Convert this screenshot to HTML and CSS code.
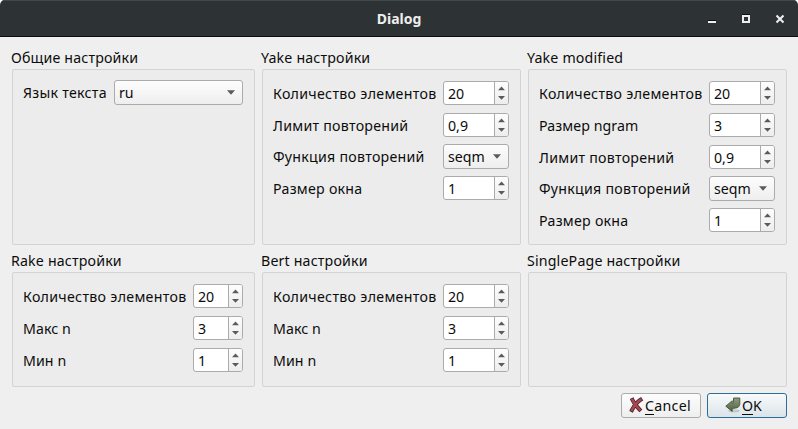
FILE: index.html
```html
<!DOCTYPE html>
<html lang="ru">
<head>
<meta charset="utf-8">
<title>Dialog</title>
<link rel="stylesheet" href="styles.css">
</head>
<body>
<svg class="defs" width="0" height="0">
  <symbol id="spin" viewBox="0 0 13 22"><path d="M3 8.3 L6.5 4.5 L10 8.3 Z M3 14 L6.5 17.8 L10 14 Z"/></symbol>
  <symbol id="down" viewBox="0 0 8 5"><path d="M0 0.3 H8 L4 4.8 Z"/></symbol>
</svg>
<div class="window">
  <header class="titlebar">
    <div class="title">Dialog</div>
    <div class="controls">
      <svg width="8" height="10" viewBox="0 0 8 10"><path class="shade" d="M0 6h8v1H0z"/><path d="M0 7h8v2H0z"/></svg>
      <svg width="8" height="10" viewBox="0 0 8 10"><path class="shade" d="M0 0h8v1H0z"/><path fill-rule="evenodd" d="M0 1h8v8H0z M2 3v4h4V3z"/></svg>
      <svg width="8" height="10" viewBox="0 0 8 10"><path class="cross" d="M0.5 1.5 L7.5 8.5 M7.5 1.5 L0.5 8.5"/></svg>
    </div>
  </header>
  <main class="groups">
    <section class="group">
      <h2>Общие настройки</h2>
      <div class="panel">
        <div class="row combo-row"><label>Язык текста</label><div class="combo wide"><span>ru</span><svg class="down"><use href="#down"/></svg></div></div>
      </div>
    </section>
    <section class="group">
      <h2>Yake настройки</h2>
      <div class="panel">
        <div class="row"><label class="long">Количество элементов</label><div class="spin"><span>20</span><svg><use href="#spin"/></svg></div></div>
        <div class="row"><label>Лимит повторений</label><div class="spin"><span>0,9</span><svg><use href="#spin"/></svg></div></div>
        <div class="row combo-row"><label>Функция повторений</label><div class="combo"><span>seqm</span><svg class="down"><use href="#down"/></svg></div></div>
        <div class="row"><label>Размер окна</label><div class="spin"><span>1</span><svg><use href="#spin"/></svg></div></div>
      </div>
    </section>
    <section class="group">
      <h2>Yake modified</h2>
      <div class="panel">
        <div class="row"><label class="long">Количество элементов</label><div class="spin"><span>20</span><svg><use href="#spin"/></svg></div></div>
        <div class="row"><label class="mixed">Размер ngram</label><div class="spin"><span>3</span><svg><use href="#spin"/></svg></div></div>
        <div class="row"><label>Лимит повторений</label><div class="spin"><span>0,9</span><svg><use href="#spin"/></svg></div></div>
        <div class="row combo-row"><label>Функция повторений</label><div class="combo"><span>seqm</span><svg class="down"><use href="#down"/></svg></div></div>
        <div class="row"><label>Размер окна</label><div class="spin"><span>1</span><svg><use href="#spin"/></svg></div></div>
      </div>
    </section>
    <section class="group">
      <h2>Rake настройки</h2>
      <div class="panel">
        <div class="row"><label class="long">Количество элементов</label><div class="spin narrow"><span>20</span><svg><use href="#spin"/></svg></div></div>
        <div class="row"><label class="mixed">Макс n</label><div class="spin narrow"><span>3</span><svg><use href="#spin"/></svg></div></div>
        <div class="row"><label class="mixed">Мин n</label><div class="spin narrow"><span>1</span><svg><use href="#spin"/></svg></div></div>
      </div>
    </section>
    <section class="group">
      <h2>Bert настройки</h2>
      <div class="panel">
        <div class="row"><label class="long">Количество элементов</label><div class="spin"><span>20</span><svg><use href="#spin"/></svg></div></div>
        <div class="row"><label class="mixed">Макс n</label><div class="spin"><span>3</span><svg><use href="#spin"/></svg></div></div>
        <div class="row"><label class="mixed">Мин n</label><div class="spin"><span>1</span><svg><use href="#spin"/></svg></div></div>
      </div>
    </section>
    <section class="group">
      <h2>SinglePage настройки</h2>
      <div class="panel"></div>
    </section>
  </main>
  <footer class="actions">
    <div class="button cancel">
      <svg width="16" height="16" viewBox="0 0 16 16"><path class="x-edge" d="M4.5 3 C6 6.5 9 10 11.5 12.5 M12.5 2.8 C9 5 6 9 4 13"/><path class="x-fill" d="M4.5 3 C6 6.5 9 10 11.5 12.5 M12.5 2.8 C9 5 6 9 4 13"/></svg>
      <span class="text"><span class="key">C</span>ancel</span>
    </div>
    <div class="button ok">
      <svg width="16" height="16" viewBox="0 0 16 16"><defs><linearGradient id="leaf" x1="0" y1="0" x2="0" y2="1"><stop offset="0" stop-color="#8f9b80"/><stop offset="1" stop-color="#4f633f"/></linearGradient></defs><ellipse class="shadow" cx="9" cy="13.8" rx="6" ry="1.6"/><path class="arrow" d="M8.5 1 H14.8 V6.5 C14.8 9.8 13 11.2 7.2 11.4 V14.4 L0.8 9.2 L7.2 3.8 V6.6 C8.2 6.6 8.5 6 8.5 5.2 Z"/></svg>
      <span class="text"><span class="key">O</span>K</span>
    </div>
  </footer>
</div>
</body>
</html>
```

FILE: styles.css
```css
* { box-sizing: border-box; }
body {
  margin: 0;
  background: #fff;
  color: #0c0c0c;
  font: 14.2px/20px "Noto Sans", "Open Sans", sans-serif;
}
.defs { position: absolute; }
.window {
  width: 798px;
  height: 429px;
  display: flex;
  flex-direction: column;
  background: #efefef;
  border-radius: 5px 5px 0 0;
  overflow: hidden;
}
.titlebar {
  height: 37px;
  flex: none;
  display: grid;
  grid-template-columns: 120px 1fr 120px;
  align-items: center;
  background: #2d3234;
  border-top: 1px solid #43484a;
  border-bottom: 1px solid #0c0e0f;
}
.title {
  grid-column: 2;
  text-align: center;
  color: #eee;
  font-weight: 700;
  font-size: 14px;
}
.controls {
  display: flex;
  justify-content: flex-end;
  gap: 26px;
  padding-right: 14px;
  fill: #eee;
}
.shade { fill: #0c0e0f; }
.cross { stroke: #eee; stroke-width: 2; }
.groups {
  flex: none;
  height: 350px;
  display: grid;
  grid-template-columns: 243px 259px 259px;
  grid-template-rows: 197px 142px;
  column-gap: 7px;
  padding: 11px 11px 0 12px;
}
.group {
  display: flex;
  flex-direction: column;
}
h2 {
  margin: 0 0 0 -1px;
  height: 21px;
  flex: none;
  font-size: inherit;
  font-weight: 400;
  letter-spacing: .17px;
  white-space: nowrap;
}
.panel {
  height: 176px;
  display: flex;
  flex-direction: column;
  gap: 8px;
  padding: 11px 11px 0 10px;
  background: #ececec;
  border: 1px solid #d3d3d3;
  border-radius: 2px;
}
.group:nth-child(n+4) h2 { height: 24px; padding-top: 3px; margin-top: 3px; }
.group:nth-child(n+4) .panel { height: 115px; }
.row {
  height: 24px;
  display: flex;
  justify-content: space-between;
  align-items: center;
  white-space: nowrap;
}
label { letter-spacing: .26px; }
.long { letter-spacing: .3px; }
.mixed { letter-spacing: .08px; }
.row:not(.combo-row) label, .spin span { padding-top: 2px; }
.combo-row { height: 25px; margin: -1px 0; }
.spin, .combo {
  width: 66px;
  height: 100%;
  flex: none;
  display: flex;
  align-items: center;
  justify-content: space-between;
  border: 1px solid #ababab;
  border-radius: 3px;
  padding-left: 4px;
}
.spin { background: #fff; overflow: hidden; }
.spin svg {
  width: 14px;
  height: 22px;
  background: linear-gradient(#fdfdfd, #ededed);
  border-left: 1px solid #ababab;
  fill: #5b5b5b;
}
.narrow { width: 50px; }
.combo {
  background: linear-gradient(#fdfdfd, #eeeeee);
  padding-right: 7px;
}
.wide { width: 129px; }
.down { width: 8px; height: 5px; fill: #5b5b5b; }
.actions {
  display: flex;
  justify-content: flex-end;
  gap: 6px;
  padding: 6px 11px 0 0;
}
.button {
  width: 80px;
  height: 25px;
  display: flex;
  align-items: center;
  gap: 1px;
  border: 1px solid #ababab;
  border-radius: 3px;
  background: linear-gradient(#fdfdfd, #eeeeee);
}
.button svg { flex: none; margin-bottom: 2px; }
.cancel { padding-left: 6px; letter-spacing: .3px; }
.ok {
  padding-left: 17px;
  border-color: #2c6d9c;
  background: linear-gradient(#f8fafb, #dbe4e9);
}
.key { display: inline-block; line-height: 18px; box-shadow: 0 -1px 0 #0c0c0c inset; }
.x-edge, .x-fill { fill: none; }
.x-edge { stroke: #4a2a30; stroke-width: 4; stroke-linecap: square; }
.x-fill { stroke: #b04552; stroke-width: 2.4; stroke-linecap: square; }
.shadow { fill: #000; opacity: .15; }
.arrow { fill: url(#leaf); stroke: #46523b; stroke-width: .9; stroke-linejoin: round; }
```
